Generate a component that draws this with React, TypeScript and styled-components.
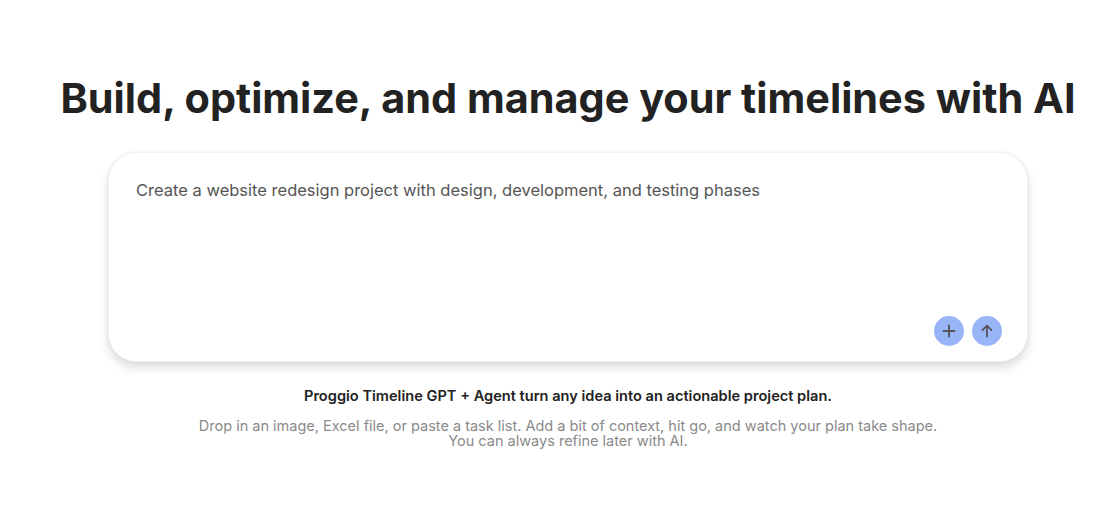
import React, { useState } from 'react';
import styled, { createGlobalStyle } from 'styled-components';

const GlobalStyle = createGlobalStyle`
  html, body {
    margin: 0;
    padding: 0;
    background: #ffffff;
  }
  body {
    font-family: Inter, 'Noto Sans', 'Liberation Sans', sans-serif;
    -webkit-font-smoothing: antialiased;
  }
`;

const Page = styled.main`
  display: flex;
  flex-direction: column;
  align-items: center;
  padding: 74px 0 40px 16px;
  min-height: 519px;
  box-sizing: border-box;
`;

const Title = styled.h1`
  margin: 0;
  font-size: 41.4px;
  line-height: 48px;
  font-weight: 700;
  color: #222222;
  letter-spacing: 0;
  text-align: center;
  white-space: nowrap;
`;

const PromptCard = styled.div`
  margin-top: 30px;
  width: 920px;
  height: 210px;
  box-sizing: border-box;
  display: flex;
  flex-direction: column;
  justify-content: space-between;
  padding: 25px 25px 15px 27px;
  background: #ffffff;
  border: 1px solid #f0f0f0;
  border-radius: 28px;
  box-shadow: 0 6px 10px rgba(0, 0, 0, 0.13), 0 0 4px rgba(0, 0, 0, 0.05);
`;

const PromptText = styled.textarea`
  flex: 1;
  border: none;
  outline: none;
  resize: none;
  padding: 0;
  margin: 0;
  background: transparent;
  font-family: inherit;
  font-size: 16.5px;
  line-height: 24px;
  color: #555555;
`;

const Actions = styled.div`
  display: flex;
  justify-content: flex-end;
  gap: 8px;
`;

const RoundButton = styled.button`
  width: 30px;
  height: 30px;
  padding: 0;
  border: none;
  border-radius: 50%;
  background: #98b6f7;
  color: #555555;
  display: flex;
  align-items: center;
  justify-content: center;
  cursor: pointer;
`;

const Tagline = styled.p`
  margin: 24px 0 0;
  font-size: 14.6px;
  line-height: 20px;
  font-weight: 600;
  color: #222222;
  text-align: center;
  white-space: nowrap;
`;

const Hint = styled.p`
  margin: 12px 0 0;
  font-size: 14.5px;
  line-height: 15px;
  font-weight: 400;
  color: #8a8a8a;
  text-align: center;
  white-space: nowrap;
`;

const PlusIcon = () => (
  <svg width="16" height="16" viewBox="0 0 16 16" fill="none" stroke="currentColor" strokeWidth="1.9" strokeLinecap="round">
    <path d="M8 2.5v11M2.5 8h11" />
  </svg>
);

const ArrowUpIcon = () => (
  <svg width="16" height="16" viewBox="0 0 16 16" fill="none" stroke="currentColor" strokeWidth="1.8" strokeLinecap="round" strokeLinejoin="round">
    <path d="M8 13.5V2.8M3.5 7.2L8 2.7l4.5 4.5" />
  </svg>
);

export default function App() {
  const [prompt, setPrompt] = useState(
    'Create a website redesign project with design, development, and testing phases'
  );

  return (
    <>
      <GlobalStyle />
      <Page>
        <Title>Build, optimize, and manage your timelines with AI</Title>
        <PromptCard>
          <PromptText value={prompt} onChange={(e) => setPrompt(e.target.value)} />
          <Actions>
            <RoundButton aria-label="Attach">
              <PlusIcon />
            </RoundButton>
            <RoundButton aria-label="Send">
              <ArrowUpIcon />
            </RoundButton>
          </Actions>
        </PromptCard>
        <Tagline>Proggio Timeline GPT + Agent turn any idea into an actionable project plan.</Tagline>
        <Hint>
          Drop in an image, Excel file, or paste a task list. Add a bit of context, hit go, and watch your plan take shape.
          <br />
          You can always refine later with AI.
        </Hint>
      </Page>
    </>
  );
}
